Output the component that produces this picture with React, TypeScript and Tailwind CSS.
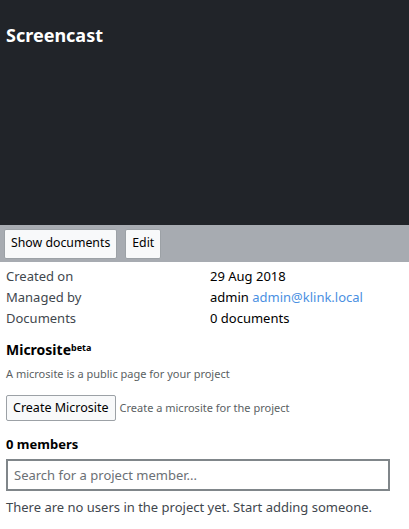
export default function App() {
  return (
    <div className="w-[409px] h-[529px] bg-white font-['Noto_Sans',sans-serif] text-[13px] text-black overflow-hidden">
      <div className="h-[225px] bg-[#212429] px-[6px] pt-[23px]">
        <h1 className="text-white font-bold text-[18px] leading-[24px]">Screencast</h1>
      </div>
      <div className="h-[37px] bg-[#a7abb1] flex items-center gap-2 px-[4px]">
        <button className="h-[30px] px-[6px] bg-[#f8f9fa] border border-[#9ca1a6] rounded-[2px] text-[12.3px]">Show documents</button>
        <button className="h-[30px] px-[6px] bg-[#f8f9fa] border border-[#9ca1a6] rounded-[2px] text-[12.3px]">Edit</button>
      </div>
      <div className="px-[6px] pt-[4px]">
        <div className="grid grid-cols-[204px_1fr] leading-[21px]">
          <span className="text-[#3f474e]">Created on</span>
          <span>29 Aug 2018</span>
          <span className="text-[#3f474e]">Managed by</span>
          <span>
            admin <span className="text-[#4a90e2]">admin@klink.local</span>
          </span>
          <span className="text-[#3f474e]">Documents</span>
          <span>0 documents</span>
        </div>
        <h2 className="mt-[12px] font-bold text-[14px] leading-[18px]">
          Microsite<sup className="text-[9px] font-bold">beta</sup>
        </h2>
        <p className="mt-[8px] text-[11px] text-[#5b5f63] leading-[14px]">A microsite is a public page for your project</p>
        <div className="mt-[14px] flex items-center gap-[4px]">
          <button className="h-[26px] px-[6px] bg-[#f8f9fa] border border-[#9ca1a6] rounded-[2px] text-[12.5px]">Create Microsite</button>
          <span className="text-[11px] text-[#5b5f63]">Create a microsite for the project</span>
        </div>
        <h3 className="mt-[14px] font-bold text-[13px] leading-[18px]">0 members</h3>
        <input
          className="mt-[6px] w-[384px] h-[32px] border-2 border-[#80868a] px-[6px] text-[13px] placeholder:text-[#6b7075] outline-none"
          placeholder="Search for a project member..."
        />
        <p className="mt-[7px] text-[#3f474e] leading-[18px]">There are no users in the project yet. Start adding someone.</p>
      </div>
    </div>
  );
}
